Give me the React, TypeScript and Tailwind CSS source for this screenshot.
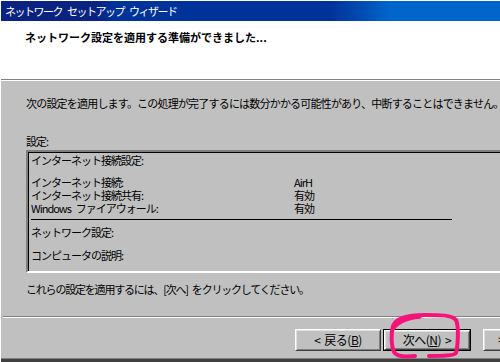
import React from 'react';

const font = { fontFamily: '"Noto Sans CJK JP", "Liberation Sans", sans-serif' };

function Row({ label, value }: { label: React.ReactNode; value?: string }) {
  return (
    <div className="flex h-[12px] leading-[12px] whitespace-nowrap">
      <div className="w-[263px] shrink-0">{label}</div>
      {value && <div>{value}</div>}
    </div>
  );
}

function WinButton({
  children,
  isDefault,
  className
}: {
  children: React.ReactNode;
  isDefault?: boolean;
  className?: string;
}) {
  const face = (
    <div className="flex h-full w-full items-center justify-center border border-t-white border-l-white border-r-[#404040] border-b-[#404040] bg-[#c0c0c0] shadow-[inset_1px_1px_0_#dfdfdf,inset_-1px_-1px_0_#808080] text-[12px] leading-none tracking-[-0.5px] whitespace-nowrap">
      {children}
    </div>
  );
  if (isDefault) {
    return <div className={`h-[22px] shrink-0 border border-black ${className ?? ''}`}>{face}</div>;
  }
  return <div className={`h-[22px] shrink-0 ${className ?? ''}`}>{face}</div>;
}

export default function App() {
  return (
    <div
      className="relative flex h-[362px] w-[500px] flex-col overflow-hidden border-l border-t border-white bg-[#c0c0c0] text-black"
      style={font}
    >
      {/* Title bar */}
      <div className="h-[20px] shrink-0 bg-[linear-gradient(to_right,#0a2280_0px,#0a2280_95px,#003399_112px,#003399_330px,#0066cc_390px,#0066cc_100%)] pl-[4px] text-[11px] leading-[20px] tracking-[-1.5px] text-white whitespace-nowrap">
        ネットワーク<span className="ml-[5px]">セットアップ</span>
        <span className="ml-[5px]">ウィザード</span>
      </div>

      {/* Header panel */}
      <div className="h-[58px] shrink-0 bg-white pl-[24px] pt-[9px]">
        <div className="text-[11px] font-bold leading-[14px] whitespace-nowrap">
          ネットワーク設定を適用する準備ができました...
        </div>
      </div>
      <div className="h-[2px] shrink-0 border-t border-b border-t-[#808080] border-b-white" />

      {/* Body */}
      <div className="flex flex-1 flex-col pl-[25px] text-[11px] tracking-[-1px]">
        <div className="mt-[15px] h-[14px] leading-[14px] tracking-[-0.8px] whitespace-nowrap">
          次の設定を適用します。この処理が完了するには数分かかる可能性があり、中断することはできません。
        </div>
        <div className="mt-[24px] h-[14px] leading-[14px]">設定:</div>

        <div className="mt-[2px] w-[520px] border-2 border-r-0 border-t-[#808080] border-l-[#808080] border-b-white">
          <div className="border-t border-l border-t-black border-l-black pl-[2px] pb-[10px]">
            <div className="pt-px">
              <Row label="インターネット接続設定:" />
            </div>
            <div className="mt-[10px]">
              <Row label="インターネット接続:" value="AirH" />
            </div>
            <div className="mt-px">
              <Row label="インターネット接続共有:" value="有効" />
            </div>
            <div className="mt-px">
              <Row
                label={
                  <>
                    Windows<span className="ml-[5px]">ファイアウォール:</span>
                  </>
                }
                value="有効"
              />
            </div>
            <div className="mt-[5px] h-px w-[421px] bg-black" />
            <div className="mt-[6px]">
              <Row label="ネットワーク設定:" />
            </div>
            <div className="mt-[11px]">
              <Row label="コンピュータの説明:" />
            </div>
          </div>
        </div>

        <div className="mt-[9px] h-[14px] leading-[14px] tracking-[-1.2px] whitespace-nowrap">
          これらの設定を適用するには、[次へ]<span className="ml-[4px]">をクリックしてください。</span>
        </div>
      </div>

      {/* Footer */}
      <div className="ml-[2px] h-[2px] shrink-0 border-t border-b border-t-[#808080] border-b-white" />
      <div className="flex h-[40px] shrink-0 items-start gap-[2px] pt-[11px] pl-[294px]">
        <WinButton className="w-[86px]">
          &lt;<span className="ml-[4px]">戻る(</span>
          <span className="underline underline-offset-1">B</span>)
        </WinButton>
        <WinButton isDefault className="w-[88px]">
          次へ(<span className="underline underline-offset-1">N</span>)
          <span className="ml-[4px]">&gt;</span>
        </WinButton>
        <WinButton className="ml-[10px] w-[86px]">キャンセル</WinButton>
      </div>
      <div className="h-[4px] shrink-0 border-t border-t-[#808080] bg-[#404040]" />

      {/* Hand-drawn highlight */}
      <svg
        className="pointer-events-none absolute left-[379px] top-[307px]"
        width="90"
        height="55"
        viewBox="380 308 90 55"
        fill="none"
      >
        <path
          d="M415 356 C405 357 396 356 394 352 C391 345 391 333 393 326 C396 318 410 315 425 315 C440 315 452 315 456 320 C459 326 458 345 456 353 C454 356 440 356 429 356"
          stroke="#f5137a"
          strokeWidth="4"
          strokeLinecap="round"
          strokeLinejoin="round"
        />
        <path
          d="M392 331 C397 321 408 318 420 317"
          stroke="#f5137a"
          strokeWidth="3.5"
          strokeLinecap="round"
        />
      </svg>
    </div>
  );
}
